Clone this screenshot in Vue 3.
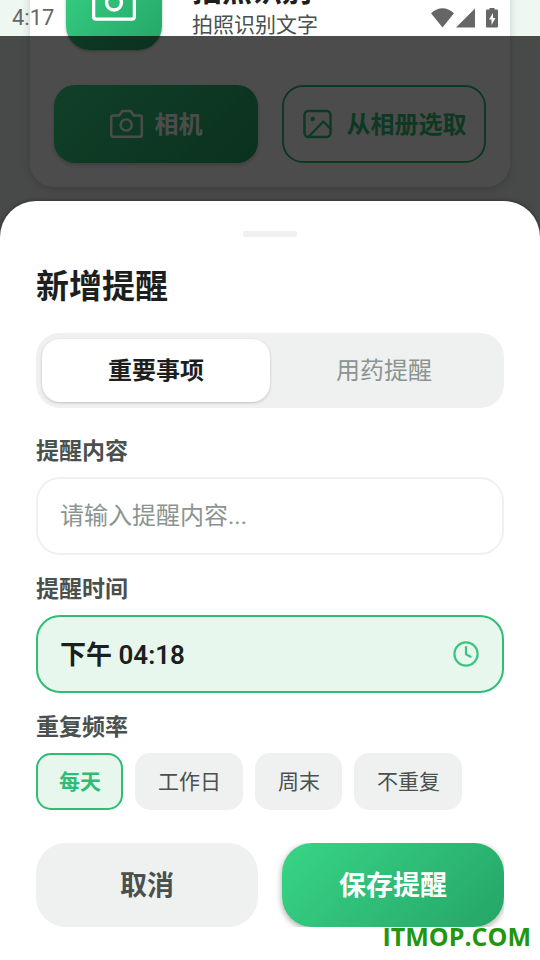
<script setup>
import { ref } from 'vue'

const kinds = ['重要事项', '用药提醒']
const kind = ref('重要事项')
const repeats = ['每天', '工作日', '周末', '不重复']
const repeat = ref('每天')
const content = ref('')
const time = ref('下午 04:18')
</script>

<template>
  <div class="app">
    <main class="scene">
      <section class="card">
        <header class="card-head">
          <div class="badge">
            <svg class="badge-icon" viewBox="0 0 33 33" aria-hidden="true">
              <path d="M3.2 8h6.1l3-4.2h8.4l3 4.2h6.1q2 0 2 2v17.3q0 2-2 2H3.2q-2 0-2-2V10q0-2 2-2z" />
              <circle cx="16.5" cy="16.9" r="5.6" />
            </svg>
          </div>
          <div class="card-text">
            <h2>拍照识别</h2>
            <p>拍照识别文字</p>
          </div>
        </header>
        <div class="pair">
          <button type="button" class="pick solid">
            <svg class="pick-icon" viewBox="0 0 33 33" aria-hidden="true">
              <path d="M3.2 7.500h6.1l3-4.500h8.4l3 4.500h6.1q2 0 2 2v17.3q0 2-2 2H3.2q-2 0-2-2V9.500q0-2 2-2z" />
              <circle cx="16.2" cy="17" r="5.6" />
            </svg>
            <span>相机</span>
          </button>
          <button type="button" class="pick outline">
            <svg class="pick-icon" viewBox="0 0 33 33" aria-hidden="true">
              <rect x="2.500" y="3" width="26" height="26" rx="4" />
              <path d="M7 28.500 21.300 13.500 28.500 20.700" />
              <circle class="dot" cx="10.700" cy="11" r="2.200" />
            </svg>
            <span>从相册选取</span>
          </button>
        </div>
      </section>
      <div class="scrim"></div>
    </main>

    <div class="status">
      <span class="clock">4:17</span>
      <svg class="status-icons" viewBox="0 0 68 20" aria-hidden="true">
        <path d="M0 5.200Q11.500-4.500 23 5.200L11.500 19.500z" />
        <path d="M25 19.500 44 .5v19z" />
        <path fill-rule="evenodd" d="M55 2.500q0-1 1-1h2.500V0h5v1.500H66q1 0 1 1v16q0 1-1 1H56q-1 0-1-1zM62 5l-4 6.500h2.500V17l4-7H62z" />
      </svg>
    </div>

    <form class="sheet" @submit.prevent>
      <div class="handle"></div>
      <h1>新增提醒</h1>

      <div class="segment">
        <button
          v-for="item in kinds"
          :key="item"
          type="button"
          :class="{ active: item === kind }"
          :aria-pressed="item === kind"
          @click="kind = item"
        >{{ item }}</button>
      </div>

      <div class="field">
        <label for="content">提醒内容</label>
        <input id="content" v-model="content" class="box" type="text" placeholder="请输入提醒内容..." />
      </div>

      <div class="field">
        <label for="time">提醒时间</label>
        <button id="time" type="button" class="box time">
          <span>{{ time }}</span>
          <svg class="time-icon" viewBox="0 0 28 28" aria-hidden="true">
            <circle cx="14" cy="14" r="11.600" />
            <path d="M14 7v7.300l4.600 2.400" />
          </svg>
        </button>
      </div>

      <div class="field">
        <span id="repeat-label" class="label">重复频率</span>
        <div class="chips" role="group" aria-labelledby="repeat-label">
          <button
            v-for="item in repeats"
            :key="item"
            type="button"
            class="chip"
            :class="{ active: item === repeat }"
            :aria-pressed="item === repeat"
            @click="repeat = item"
          >{{ item }}</button>
        </div>
      </div>

      <div class="pair actions">
        <button type="button" class="action cancel">取消</button>
        <button type="submit" class="action save">保存提醒</button>
      </div>
    </form>

    <div class="watermark">ITMOP.COM</div>
  </div>
</template>

<style>
body {
  margin: 0;
}
</style>

<style scoped>
.app {
  position: relative;
  display: flex;
  flex-direction: column;
  min-height: 100vh;
  overflow: hidden;
  background: #fff;
  color: #1c1f1e;
  font-family: Roboto, "Noto Sans CJK SC", sans-serif;
}

.app *,
.app {
  box-sizing: border-box;
}

button,
input {
  margin: 0;
  padding: 0;
  border: 0;
  font: inherit;
  color: inherit;
}

h1,
h2,
p {
  margin: 0;
}

svg {
  display: block;
  flex: none;
  fill: none;
  stroke: currentColor;
  stroke-linecap: round;
  stroke-linejoin: round;
}

.scene {
  position: relative;
  flex: 1 0 0;
  display: flex;
  flex-direction: column;
  justify-content: flex-end;
  padding: 0 30px 50px;
  min-height: 237px;
  height: 0;
  overflow: hidden;
  background: #eef7f2;
}

.scrim {
  position: absolute;
  inset: 36px 0 0;
  background: rgba(0, 0, 0, 0.7);
}

.card {
  padding: 24px;
  border-radius: 24px;
  background: #fff;
  box-shadow: 0 2px 8px rgba(0, 0, 0, 0.16);
}

.card-head {
  display: flex;
  align-items: flex-end;
  gap: 30px;
  padding: 0 12px 35px;
}

.badge {
  display: grid;
  place-items: center;
  width: 96px;
  height: 96px;
  border-radius: 24px;
  background: linear-gradient(135deg, #38d586, #25a567);
  color: #fff;
  box-shadow: 0 1px 3px rgba(0, 0, 0, 0.3);
}

.badge-icon {
  width: 44px;
  height: 44px;
  stroke-width: 2.500;
}

.card-text {
  padding-bottom: 10px;
}

.card-text h2 {
  font-size: 30px;
  line-height: 38px;
  font-weight: 700;
}

.card-text p {
  font-size: 21px;
  line-height: 30px;
  color: #4a504d;
}

.pair {
  display: grid;
  grid-template-columns: 1fr 1fr;
  gap: 24px;
}

.pick {
  display: flex;
  align-items: center;
  justify-content: center;
  gap: 12px;
  height: 78px;
  border-radius: 21px;
  font-size: 24px;
  font-weight: 700;
}

.pick span,
.time span {
  padding-bottom: 4px;
}

.pick-icon {
  width: 33px;
  height: 33px;
  stroke-width: 2.400;
}

.solid {
  background: linear-gradient(135deg, #38d586, #25a567);
  color: #fff;
  box-shadow: 0 2px 4px rgba(0, 0, 0, 0.2);
}

.outline {
  border: 2px solid #2dbd75;
  background: none;
  color: #2dbd75;
}

.dot {
  fill: currentColor;
  stroke: none;
}

.status {
  position: absolute;
  inset: 0 0 auto;
  display: flex;
  align-items: center;
  justify-content: space-between;
  height: 36px;
  padding: 0 41px 0 12px;
  color: #666;
}

.clock {
  font-size: 22px;
  line-height: 36px;
}

.status-icons {
  width: 68px;
  height: 20px;
  fill: currentColor;
  stroke: none;
}

.sheet {
  position: relative;
  display: flex;
  flex-direction: column;
  margin-top: -36px;
  padding: 30px 36px 33px;
  border-radius: 36px 36px 0 0;
  background: #fff;
  box-shadow: 0 0 4px rgba(0, 0, 0, 0.4);
}

.handle {
  align-self: center;
  width: 54px;
  height: 6px;
  border-radius: 2px;
  background: #eff1f0;
}

h1 {
  margin: 26px 0 22px;
  font-size: 33px;
  line-height: 48px;
  font-weight: 600;
}

.segment {
  display: grid;
  grid-template-columns: 1fr 1fr;
  height: 75px;
  margin-bottom: 29px;
  padding: 6px;
  border-radius: 24px;
  background: #eff1f0;
}

.segment button {
  padding-bottom: 4px;
  border-radius: 18px;
  background: none;
  font-size: 24px;
  color: #8b9490;
}

.segment .active {
  background: #fff;
  color: #1c1f1e;
  font-weight: 700;
  box-shadow: 0 1px 3px rgba(0, 0, 0, 0.2);
}

.field {
  display: flex;
  flex-direction: column;
  gap: 10px;
  margin-bottom: 20px;
}

label,
.label {
  font-size: 23px;
  line-height: 30px;
  font-weight: 600;
  color: #4a504d;
}

.box {
  width: 100%;
  height: 78px;
  padding: 0 22px;
  border: 2px solid #eff1f0;
  border-radius: 24px;
  background: #fff;
  font-size: 24px;
}

.box::placeholder {
  color: #8b9490;
  opacity: 1;
}

.time {
  display: flex;
  align-items: center;
  justify-content: space-between;
  border-color: #2dbd75;
  background: #e8f7ee;
  font-size: 26px;
  font-weight: 600;
}

.time-icon {
  width: 28px;
  height: 28px;
  color: #38c680;
  stroke-width: 2.200;
}

.chips {
  display: flex;
  flex-wrap: wrap;
  gap: 12px;
}

.chip {
  height: 57px;
  padding: 0 20px 4px 21px;
  border: 2px solid #eff1f0;
  border-radius: 15px;
  background: #eff1f0;
  font-size: 21px;
  color: #4a504d;
}

.chip.active {
  border-color: #2dbd75;
  background: #e8f7ee;
  color: #2dbd75;
  font-weight: 700;
}

.actions {
  margin-top: 13px;
}

.action {
  height: 84px;
  padding-bottom: 4px;
  border-radius: 30px;
  font-size: 27px;
  font-weight: 600;
}

.cancel {
  background: #eff1f0;
  color: #4a504d;
}

.save {
  background: linear-gradient(135deg, #38d586, #25a567);
  color: #fff;
  box-shadow: 0 2px 6px rgba(0, 0, 0, 0.35);
  clip-path: inset(0 0 0 -6px);
}

.watermark {
  position: absolute;
  right: 9px;
  bottom: 7px;
  font-family: "Open Sans", sans-serif;
  font-size: 25px;
  line-height: 34px;
  font-weight: 700;
  color: #22960f;
}
</style>
